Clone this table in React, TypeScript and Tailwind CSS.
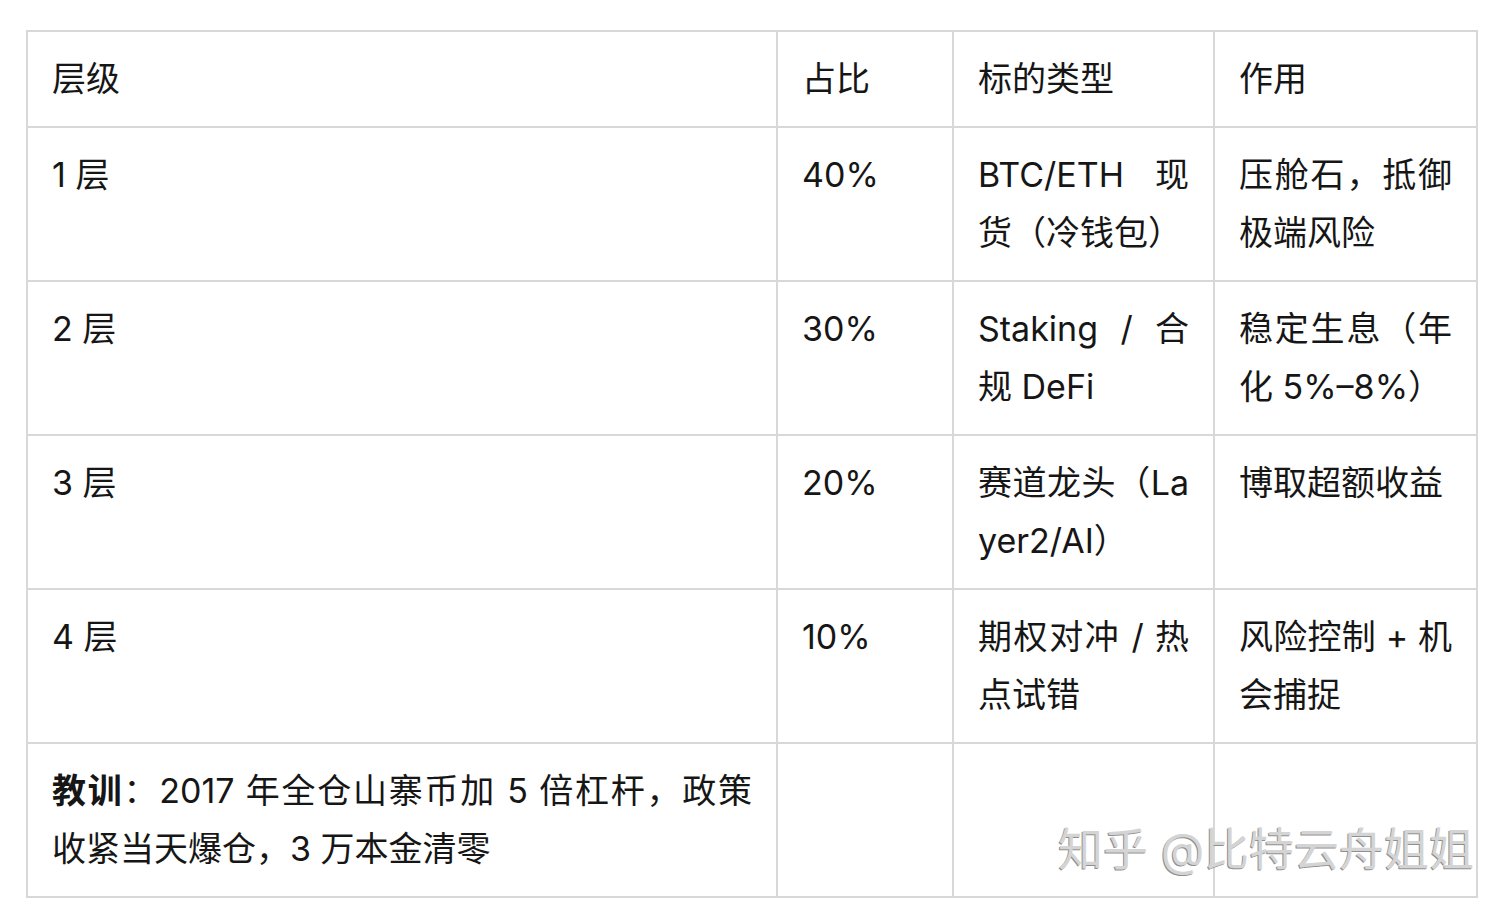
import React from "react";

const rows: { a: React.ReactNode; b: string; c: string; d: string }[] = [
  { a: "1 层", b: "40%", c: "BTC/ETH 现货（冷钱包）", d: "压舱石，抵御极端风险" },
  { a: "2 层", b: "30%", c: "Staking / 合规 DeFi", d: "稳定生息（年化 5%–8%）" },
  { a: "3 层", b: "20%", c: "赛道龙头（Layer2/AI）", d: "博取超额收益" },
  { a: "4 层", b: "10%", c: "期权对冲 / 热点试错", d: "风险控制 + 机会捕捉" },
];

const cell = "border-2 border-[#d8d8d8] px-[24px] py-[18px] align-top text-justify break-all";

export default function App() {
  return (
    <div
      className="relative min-h-[914px] w-[1512px] bg-white pl-[26px] pt-[30px] text-[#161616]"
      style={{ fontFamily: 'Inter, "Noto Sans CJK SC", "Noto Sans", sans-serif' }}
    >
      <table className="w-[1450px] table-fixed border-collapse text-[34px] leading-[58px]">
        <colgroup>
          <col className="w-[750px]" />
          <col className="w-[176px]" />
          <col className="w-[261px]" />
          <col className="w-[263px]" />
        </colgroup>
        <thead>
          <tr>
            <td className={cell}>层级</td>
            <td className={cell}>占比</td>
            <td className={cell}>标的类型</td>
            <td className={cell}>作用</td>
          </tr>
        </thead>
        <tbody>
          {rows.map((r, i) => (
            <tr key={i}>
              <td className={cell}>{r.a}</td>
              <td className={cell}>{r.b}</td>
              <td className={cell}>{r.c}</td>
              <td className={cell}>{r.d}</td>
            </tr>
          ))}
          <tr>
            <td className={cell}>
              <b className="font-bold">教训</b>：2017 年全仓山寨币加 5 倍杠杆，政策收紧当天爆仓，3 万本金清零
            </td>
            <td className={cell}></td>
            <td className={cell}></td>
            <td className={cell}></td>
          </tr>
        </tbody>
      </table>
      <div className="pointer-events-none absolute left-[1058px] top-[820px] text-[45px] leading-[60px] text-[#d4d4d4] [text-shadow:-1px_1px_0_#8f8f8f]">
        知乎 @比特云舟姐姐
      </div>
    </div>
  );
}
